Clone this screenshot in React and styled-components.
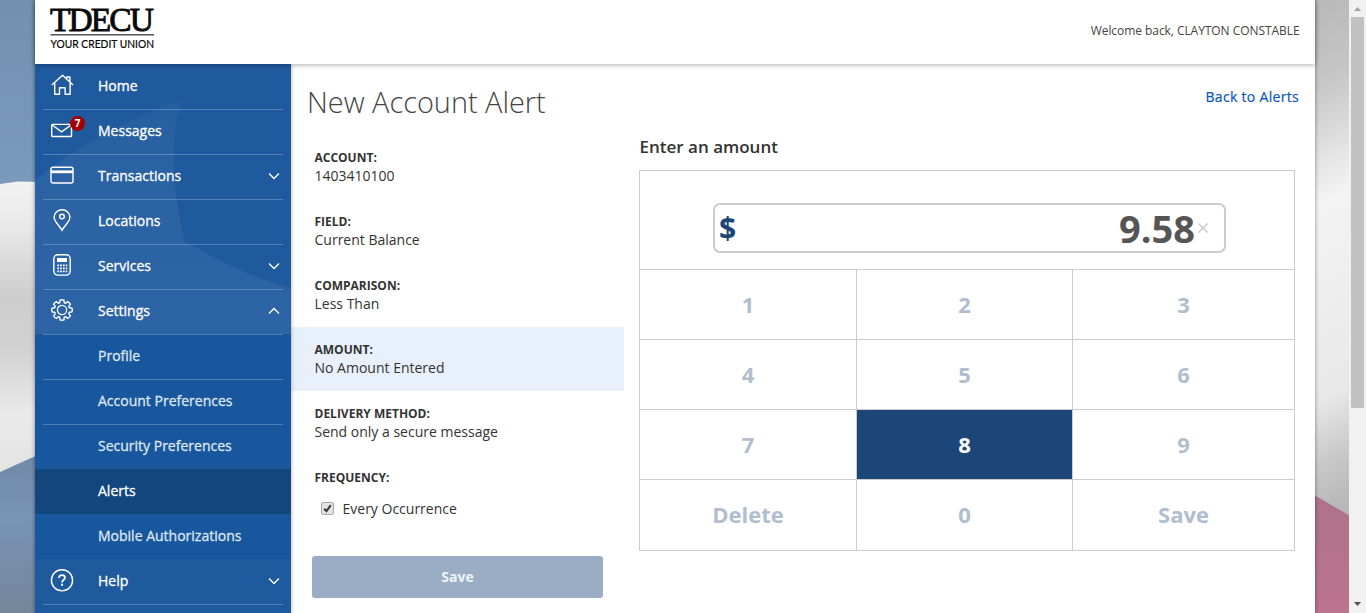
import React from "react";
import styled, { createGlobalStyle, css } from "styled-components";

const Global = createGlobalStyle`
  * { box-sizing: border-box; }
  body { margin: 0; overflow: hidden; font-family: "Open Sans", "Noto Sans", sans-serif; color: #333; }
  button { font: inherit; border: 0; padding: 0; margin: 0; background: none; }
  h1, h2, p { margin: 0; font-weight: 400; }
`;

const Screen = styled.div`
  position: relative;
  display: flex;
  height: 613px;
  width: 1366px;
  overflow: hidden;
`;
const Backdrop = styled.svg`
  position: absolute;
  inset: 0;
  width: 1366px;
  height: 613px;
`;
const Page = styled.div`
  position: relative;
  width: 1280px;
  margin-left: 35px;
  display: flex;
  flex-direction: column;
  background: #fff;
  box-shadow: 0 0 4px rgba(0, 0, 0, 0.45);
`;
const Header = styled.header`
  position: relative;
  z-index: 2;
  height: 64px;
  flex: none;
  display: flex;
  justify-content: space-between;
  padding: 0 15px;
  background: #fff;
  box-shadow: 0 1px 5px rgba(0, 0, 0, 0.32);
`;
const LogoArt = styled.svg`
  width: 112px;
  height: 54px;
  overflow: visible;
`;
const Welcome = styled.div`
  font-size: 12px;
  line-height: 17px;
  letter-spacing: -0.06px;
  margin: 22px 0.5px 0 0;
  color: #444;
`;
const Main = styled.div`
  flex: 1;
  display: flex;
  min-height: 0;
  overflow: hidden;
`;

const Sidebar = styled.nav`
  position: relative;
  width: 256px;
  flex: none;
  background: #205a9e;
  box-shadow: 0 0 4px rgba(0, 0, 0, 0.35);
`;
const SidebarArt = styled.svg`
  position: absolute;
  left: 0;
  top: 0;
  width: 256px;
  height: 549px;
`;
const NavRow = styled.div`
  position: relative;
  height: 45px;
  padding: 0 8px;
  color: ${(p) => (p.$sub && !p.$active ? "#dde6f0" : "#fff")};
  background: ${(p) => (p.$active ? "#14467e" : p.$sub ? "#18569d" : "transparent")};
`;
const NavInner = styled.div`
  height: 45px;
  display: flex;
  align-items: center;
  padding: 0 2.5px 3px 7px;
  border-top: 1px solid ${(p) => (p.$noLine ? "transparent" : "rgba(255,255,255,0.23)")};
`;
const NavIcon = styled.span`
  position: relative;
  width: 24px;
  height: 24px;
  margin: -1px 24px 0 0;
  svg { display: block; fill: none; stroke: #fff; stroke-width: 1.4; }
`;
const NavText = styled.span`
  flex: 1;
  font-size: 14px;
  line-height: 20px;
  -webkit-text-stroke: 0.3px currentColor;
`;
const Badge = styled.span`
  position: absolute;
  left: 20px;
  top: -2px;
  width: 15px;
  height: 15px;
  border-radius: 50%;
  background: #a50000;
  font-size: 10px;
  font-weight: 700;
  line-height: 15px;
  text-align: center;
`;
const Caret = styled.svg`
  width: 14px;
  height: 10px;
  fill: none;
  stroke: #fff;
  stroke-width: 1.3;
`;

const Content = styled.main`
  flex: 1;
  display: flex;
  flex-direction: column;
`;
const TitleBar = styled.div`
  height: 71px;
  display: flex;
  justify-content: space-between;
  padding: 19px 16px 0 16px;
`;
const Title = styled.h1`
  font-size: 28.9px;
  font-weight: 300;
  line-height: 38px;
  color: #444;
`;
const BackLink = styled.a`
  font-size: 14px;
  line-height: 20px;
  letter-spacing: 0.31px;
  margin-top: 4px;
  color: #0b55bd;
  -webkit-text-stroke: 0.2px currentColor;
`;
const Columns = styled.div`
  display: flex;
`;
const Details = styled.section`
  width: 333px;
`;
const Detail = styled.div`
  height: 64px;
  padding: 14px 0 0 23.5px;
  background: ${(p) => (p.$active ? "#e8f0fb" : "transparent")};
`;
const DetailLabel = styled.p`
  font-size: 12px;
  font-weight: 700;
  line-height: 17px;
`;
const DetailValue = styled.p`
  font-size: 14px;
  line-height: 20px;
`;
const CheckRow = styled.label`
  display: flex;
  align-items: center;
  padding-left: 30px;
  height: 20px;
  margin-top: -21px;
  font-size: 14px;
  gap: 8.5px;
`;
const SaveButton = styled.button`
  display: block;
  width: 291px;
  height: 42px;
  margin: 38px 0 0 21px;
  padding-bottom: 2px;
  border-radius: 3px;
  background: #9badc4;
  color: #eff3f7;
  font-size: 14px;
  font-weight: 700;
`;

const Entry = styled.section`
  width: 656px;
  margin-left: 15px;
`;
const EntryTitle = styled.h2`
  font-size: 17px;
  font-weight: 600;
  line-height: 22px;
  height: 35px;
  padding: 1px 0 0 0.5px;
`;
const Pad = styled.div`
  border: 1px solid #ccc;
  height: 381px;
  display: flex;
  flex-direction: column;
`;
const Display = styled.div`
  height: 99px;
  flex: none;
  padding: 32px 0 0 73px;
  border-bottom: 1px solid #ccc;
`;
const AmountBox = styled.div`
  width: 513px;
  height: 50px;
  border: 2px solid #ccc;
  border-radius: 7px;
  display: flex;
  align-items: center;
  padding: 0 16px 0 4px;
`;
const Currency = styled.span`
  font-size: 30px;
  font-weight: 700;
  color: #1c4677;
  line-height: 40px;
`;
const Amount = styled.span`
  margin-left: auto;
  font-size: 38px;
  font-weight: 700;
  line-height: 46px;
  color: #555;
`;
const ClearIcon = styled.svg`
  width: 10px;
  height: 10px;
  margin: -1px 0 0 3px;
  stroke: #c4c4c4;
  stroke-width: 1.3;
`;
const Keys = styled.div`
  flex: 1;
  display: grid;
  grid-template-columns: 217px 216px 1fr;
  grid-template-rows: 70px 70px 70px 1fr;
`;
const Key = styled.button`
  font-size: 22px;
  font-weight: 700;
  padding: 0 0 2px 0;
  color: ${(p) => (p.$pressed ? "#fff" : "#b0bece")};
  background: ${(p) => (p.$pressed ? "#1c4677" : "#fff")};
  ${(p) => !p.$lastCol && css`border-right: 1px solid #ccc;`}
  ${(p) => !p.$lastRow && css`border-bottom: 1px solid #ccc;`}
`;

const Scrollbar = styled.div`
  position: relative;
  margin-left: 34px;
  width: 17px;
  background: #f1f1f1;
  display: flex;
  flex-direction: column;
  align-items: center;
`;
const Thumb = styled.div`
  width: 13px;
  height: 391px;
  margin-bottom: auto;
  background: #c1c1c1;
`;
const ScrollArrow = styled.svg`
  width: 17px;
  height: 17px;
  fill: ${(p) => p.$color};
`;

const gearPath = (() => {
  const n = 8;
  const pts = [];
  const at = (r, a) => `${(12 + r * Math.cos(a)).toFixed(2)} ${(12 + r * Math.sin(a)).toFixed(2)}`;
  for (let i = 0; i < n; i++) {
    const c = (i * 2 * Math.PI) / n;
    pts.push(`${i ? "L" : "M"}${at(7.9, c - 0.28)}`);
    pts.push(`L${at(10.1, c - 0.19)}`);
    pts.push(`Q${at(10.7, c)} ${at(10.1, c + 0.19)}`);
    pts.push(`L${at(7.9, c + 0.28)}`);
    pts.push(`Q${at(7.1, c + Math.PI / n)} ${at(7.9, c + (2 * Math.PI) / n - 0.28)}`);
  }
  return pts.join("") + "Z";
})();

const icons = {
  home: (
    <svg width="24" height="24" viewBox="0 0 24 24">
      <path d="M1.8 12 12.5 2.3 23 12M4.7 10v11.3h4.8V14.7h5.6v6.6h5V10M16.7 5.8V4h3.2v4.8" strokeLinejoin="round" />
    </svg>
  ),
  mail: (
    <svg width="24" height="24" viewBox="0 0 24 24">
      <rect x="1.7" y="6.4" width="19.8" height="12.1" rx="0.8" />
      <path d="m2.2 7 9.4 6.9L21 7" />
    </svg>
  ),
  card: (
    <svg width="24" height="24" viewBox="0 0 24 24">
      <rect x="1" y="4.3" width="22" height="15.7" rx="2" />
      <path d="M1 8.8h22" strokeWidth="2.8" />
    </svg>
  ),
  pin: (
    <svg width="24" height="24" viewBox="0 0 24 24">
      <path d="M12 22.3C8.8 17 4.1 13.2 4.1 9.4a7.9 7.6 0 0 1 15.8 0c0 3.8-4.7 7.6-7.9 12.9Z" />
      <circle cx="12" cy="8.6" r="2.3" />
    </svg>
  ),
  calc: (
    <svg width="24" height="24" viewBox="0 0 24 24">
      <rect x="3.8" y="1.7" width="16.4" height="20.4" rx="4" />
      <rect x="7" y="5" width="10" height="4" fill="#fff" stroke="none" />
      <path d="M7.3 12.3h10M7.3 15.3h10M7.3 18.3h10" strokeWidth="1.7" strokeDasharray="1.8 1" />
    </svg>
  ),
  gear: (
    <svg width="24" height="24" viewBox="0 0 24 24">
      <path d={gearPath} />
      <circle cx="12" cy="12" r="4.6" strokeWidth="1.2" />
    </svg>
  ),
  help: (
    <svg width="24" height="24" viewBox="0 0 24 24">
      <circle cx="12" cy="12.3" r="10.6" />
      <path d="M9 9.9C9 7.8 10.3 7.1 12 7.1s3 .9 3 2.5c0 2.3-2.9 2.2-2.9 4.9M12.1 15.8v2" strokeWidth="1.8" />
    </svg>
  ),
};

const nav = [
  { text: "Home", icon: "home", noLine: true },
  { text: "Messages", icon: "mail", badge: 7 },
  { text: "Transactions", icon: "card", caret: "down" },
  { text: "Locations", icon: "pin" },
  { text: "Services", icon: "calc", caret: "down" },
  { text: "Settings", icon: "gear", caret: "up" },
  { text: "Profile", sub: true },
  { text: "Account Preferences", sub: true },
  { text: "Security Preferences", sub: true },
  { text: "Alerts", sub: true, active: true, noLine: true },
  { text: "Mobile Authorizations", sub: true, noLine: true },
  { text: "Help", icon: "help", caret: "down", noLine: true },
  { text: "" },
];

const details = [
  ["ACCOUNT:", "1403410100"],
  ["FIELD:", "Current Balance"],
  ["COMPARISON:", "Less Than"],
  ["AMOUNT:", "No Amount Entered", true],
  ["DELIVERY METHOD:", "Send only a secure message"],
  ["FREQUENCY:", ""],
];

const keys = ["1", "2", "3", "4", "5", "6", "7", "8", "9", "Delete", "0", "Save"];

function Logo() {
  return (
    <LogoArt viewBox="0 0 112 54">
      <text x="0" y="30.7" fontFamily="Liberation Serif, serif" fontSize="33.5" textLength="104" lengthAdjust="spacing" fill="#0a0a0a" stroke="#0a0a0a" strokeWidth="0.9">TDECU</text>
      <path d="M0.5 34.8h103.5" stroke="#555" strokeWidth="1.4" />
      <text x="0.5" y="47.5" fontFamily="Lato, sans-serif" fontSize="11" textLength="103.5" lengthAdjust="spacingAndGlyphs" fill="#000" stroke="#000" strokeWidth="0.15">YOUR CREDIT UNION</text>
    </LogoArt>
  );
}

function Background() {
  return (
    <Backdrop viewBox="0 0 1366 613">
      <defs>
        <linearGradient id="lt" x1="0" y1="0" x2="0" y2="1">
          <stop offset="0" stopColor="#7390b0" />
          <stop offset="1" stopColor="#7c9abd" />
        </linearGradient>
        <linearGradient id="lm" x1="0" y1="0" x2="0" y2="1">
          <stop offset="0" stopColor="#f2f2f2" />
          <stop offset="0.15" stopColor="#e9e9e9" />
          <stop offset="0.4" stopColor="#cdcdcd" />
          <stop offset="0.58" stopColor="#d2d2d2" />
          <stop offset="0.8" stopColor="#eaeaea" />
          <stop offset="1" stopColor="#e3e3e3" />
        </linearGradient>
        <linearGradient id="lb" x1="0" y1="0" x2="0" y2="1">
          <stop offset="0" stopColor="#7089a6" />
          <stop offset="0.4" stopColor="#7994b5" />
          <stop offset="1" stopColor="#74869b" />
        </linearGradient>
        <linearGradient id="rt" x1="0" y1="0" x2="0.04" y2="1">
          <stop offset="0" stopColor="#b8b8b8" />
          <stop offset="0.17" stopColor="#c6c6c6" />
          <stop offset="0.32" stopColor="#e4e4e4" />
          <stop offset="0.4" stopColor="#f3f3f3" />
          <stop offset="0.78" stopColor="#e8e8e8" />
          <stop offset="0.9" stopColor="#c9c9c9" />
          <stop offset="1" stopColor="#b8b8b8" />
        </linearGradient>
        <linearGradient id="rb" x1="0" y1="0" x2="0" y2="1">
          <stop offset="0" stopColor="#ad7388" />
          <stop offset="1" stopColor="#bb748d" />
        </linearGradient>
      </defs>
      <rect width="40" height="190" fill="url(#lt)" />
      <path d="M0 184 18 181.5 40 182V455L0 472Z" fill="url(#lm)" />
      <path d="M0 472 40 454V613H0Z" fill="url(#lb)" />
      <rect x="1310" width="40" height="520" fill="url(#rt)" />
      <path d="M1310 492.5 1350 516V613H1310Z" fill="url(#rb)" />
    </Backdrop>
  );
}

export default function App() {
  return (
    <>
      <Global />
      <Screen>
        <Background />
        <Page>
          <Header>
            <Logo />
            <Welcome>Welcome back, CLAYTON CONSTABLE</Welcome>
          </Header>
          <Main>
            <Sidebar>
              <SidebarArt viewBox="0 0 256 549">
                <defs>
                  <linearGradient id="swoosh" x1="0" y1="0" x2="0" y2="1">
                    <stop offset="0" stopColor="#265fa1" />
                    <stop offset="0.3" stopColor="#2b62a3" />
                    <stop offset="1" stopColor="#2c64a5" />
                  </linearGradient>
                </defs>
                <path d="M0 116C45 80 95 55 148 35C134 60 137 130 150 178C185 197 220 215 256 224V271H0Z" fill="url(#swoosh)" />
              </SidebarArt>
              {nav.map((n) => (
                <NavRow key={n.text} $sub={n.sub} $active={n.active}>
                  <NavInner $noLine={n.noLine}>
                    <NavIcon>
                      {n.icon && icons[n.icon]}
                      {n.badge && <Badge>{n.badge}</Badge>}
                    </NavIcon>
                    <NavText>{n.text}</NavText>
                    {n.caret && (
                      <Caret viewBox="0 0 14 10">
                        <path d={n.caret === "down" ? "M2 2.5 7 7.5 12 2.5" : "M2 7.5 7 2.5 12 7.5"} />
                      </Caret>
                    )}
                  </NavInner>
                </NavRow>
              ))}
            </Sidebar>
            <Content>
              <TitleBar>
                <Title>New Account Alert</Title>
                <BackLink>Back to Alerts</BackLink>
              </TitleBar>
              <Columns>
                <Details>
                  {details.map(([label, value, active]) => (
                    <Detail key={label} $active={active}>
                      <DetailLabel>{label}</DetailLabel>
                      <DetailValue>{value}</DetailValue>
                    </Detail>
                  ))}
                  <CheckRow>
                    <svg width="13" height="13" viewBox="0 0 13 13">
                      <rect x="0.5" y="0.5" width="12" height="12" rx="1.5" fill="#e3e3e3" stroke="#a8a8a8" />
                      <path d="M3.2 6.8 5.4 9.2 9.8 3.2" fill="none" stroke="#3c3c3c" strokeWidth="2.1" />
                    </svg>
                    Every Occurrence
                  </CheckRow>
                  <SaveButton>Save</SaveButton>
                </Details>
                <Entry>
                  <EntryTitle>Enter an amount</EntryTitle>
                  <Pad>
                    <Display>
                      <AmountBox>
                        <Currency>$</Currency>
                        <Amount>9.58</Amount>
                        <ClearIcon viewBox="0 0 10 10">
                          <path d="M0.5 0.5 9.5 9.5M9.5 0.5 0.5 9.5" />
                        </ClearIcon>
                      </AmountBox>
                    </Display>
                    <Keys>
                      {keys.map((k, i) => (
                        <Key key={k} $pressed={k === "8"} $lastCol={i % 3 === 2} $lastRow={i > 8}>
                          {k}
                        </Key>
                      ))}
                    </Keys>
                  </Pad>
                </Entry>
              </Columns>
            </Content>
          </Main>
        </Page>
        <Scrollbar>
          <ScrollArrow $color="#a3a3a3" viewBox="0 0 17 17"><path d="M5 11 8.5 7 12 11Z" /></ScrollArrow>
          <Thumb />
          <ScrollArrow $color="#505050" viewBox="0 0 17 17"><path d="M5 6 8.5 10 12 6Z" /></ScrollArrow>
        </Scrollbar>
      </Screen>
    </>
  );
}
